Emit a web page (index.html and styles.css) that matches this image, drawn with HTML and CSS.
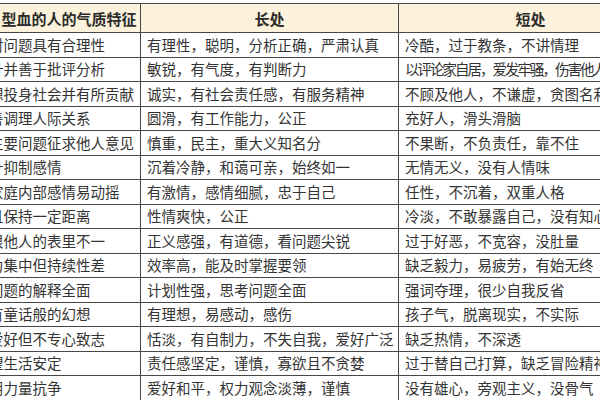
FILE: index.html
```html
<!DOCTYPE html>
<html lang="zh-CN">
<head>
<meta charset="utf-8">
<title>血型气质特征</title>
<link rel="stylesheet" href="styles.css">
</head>
<body>
<div class="sheet">
  <div class="grid">
    <div class="cell head c1">Ａ型血的人的气质特征</div>
    <div class="cell head">长处</div>
    <div class="cell head">短处</div>

    <div class="cell c1">对问题具有合理性</div>
    <div class="cell">有理性，聪明，分析正确，严肃认真</div>
    <div class="cell">冷酷，过于教条，不讲情理</div>

    <div class="cell c1">针并善于批评分析</div>
    <div class="cell">敏锐，有气度，有判断力</div>
    <div class="cell tight">以评论家自居，爱发牢骚，伤害他人</div>

    <div class="cell c1">想投身社会并有所贡献</div>
    <div class="cell">诚实，有社会责任感，有服务精神</div>
    <div class="cell">不顾及他人，不谦虚，贪图名利</div>

    <div class="cell c1">善调理人际关系</div>
    <div class="cell">圆滑，有工作能力，公正</div>
    <div class="cell">充好人，滑头滑脑</div>

    <div class="cell c1">主要问题征求他人意见</div>
    <div class="cell">慎重，民主，重大义知名分</div>
    <div class="cell">不果断，不负责任，靠不住</div>

    <div class="cell c1">针抑制感情</div>
    <div class="cell">沉着冷静，和蔼可亲，始终如一</div>
    <div class="cell">无情无义，没有人情味</div>

    <div class="cell c1">家庭内部感情易动摇</div>
    <div class="cell">有激情，感情细腻，忠于自己</div>
    <div class="cell">任性，不沉着，双重人格</div>

    <div class="cell c1">且保持一定距离</div>
    <div class="cell">性情爽快，公正</div>
    <div class="cell">冷淡，不敢暴露自己，没有知心朋友</div>

    <div class="cell c1">恨他人的表里不一</div>
    <div class="cell">正义感强，有道德，看问题尖锐</div>
    <div class="cell">过于好恶，不宽容，没肚量</div>

    <div class="cell c1">力集中但持续性差</div>
    <div class="cell">效率高，能及时掌握要领</div>
    <div class="cell">缺乏毅力，易疲劳，有始无终</div>

    <div class="cell c1">问题的解释全面</div>
    <div class="cell">计划性强，思考问题全面</div>
    <div class="cell">强词夺理，很少自我反省</div>

    <div class="cell c1">有童话般的幻想</div>
    <div class="cell">有理想，易感动，感伤</div>
    <div class="cell">孩子气，脱离现实，不实际</div>

    <div class="cell c1">爱好但不专心致志</div>
    <div class="cell">恬淡，有自制力，不失自我，爱好广泛</div>
    <div class="cell">缺乏热情，不深透</div>

    <div class="cell c1">望生活安定</div>
    <div class="cell">责任感坚定，谨慎，寡欲且不贪婪</div>
    <div class="cell">过于替自己打算，缺乏冒险精神</div>

    <div class="cell c1">用力量抗争</div>
    <div class="cell">爱好和平，权力观念淡薄，谨慎</div>
    <div class="cell">没有雄心，旁观主义，没骨气</div>
  </div>
</div>
</body>
</html>
```
FILE: styles.css
```css
html, body {
  margin: 0;
  padding: 0;
  background: #ffffff;
}
body {
  width: 600px;
  height: 400px;
  overflow: hidden;
  font-family: "Noto Sans CJK SC", "Noto Sans", "DejaVu Sans", sans-serif;
  color: #333333;
}
.sheet {
  padding-top: 3px;
  margin-left: -18px;
}
.grid {
  display: grid;
  grid-template-columns: 158px 258px 264px;
  grid-template-rows: 29px;
  grid-auto-rows: 24.5px;
  width: 680px;
  border-top: 1px solid #474747;
  border-left: 1px solid #474747;
}
.cell {
  box-sizing: border-box;
  border-right: 1px solid #474747;
  border-bottom: 1px solid #474747;
  padding: 0 6px;
  font-size: 14.5px;
  line-height: 1;
  display: flex;
  align-items: center;
  white-space: nowrap;
  overflow: hidden;
}
.head {
  background: #fcf2dc;
  font-weight: 700;
  font-size: 15px;
  color: #2b2b2b;
  justify-content: center;
  padding: 0;
}
.tight {
  letter-spacing: -2px;
}
```
